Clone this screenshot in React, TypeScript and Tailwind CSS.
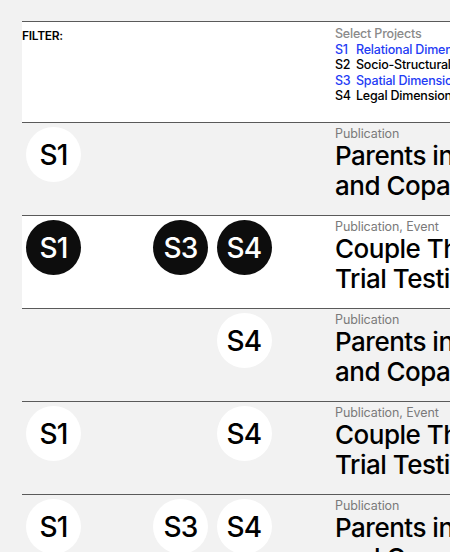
const projects = [
  { id: 'S1', name: 'Relational Dimension', active: true },
  { id: 'S2', name: 'Socio-Structural Dimension', active: false },
  { id: 'S3', name: 'Spatial Dimension', active: true },
  { id: 'S4', name: 'Legal Dimension', active: false },
]

const items = [
  { tags: ['S1'], type: 'Publication', title: 'Parents in Separation and Coparenting', highlight: false },
  { tags: ['S1', 'S3', 'S4'], type: 'Publication, Event', title: 'Couple Therapy and Trial Testimony', highlight: true },
  { tags: ['S4'], type: 'Publication', title: 'Parents in Separation and Coparenting', highlight: false },
  { tags: ['S1', 'S4'], type: 'Publication, Event', title: 'Couple Therapy and Trial Testimony', highlight: false },
  { tags: ['S1', 'S3', 'S4'], type: 'Publication', title: 'Parents in Separation and Coparenting', highlight: false },
]

const slots = ['S1', 'S2', 'S3', 'S4']

export default function App() {
  return (
    <div
      className="min-h-screen w-[450px] h-[552px] overflow-hidden bg-[#f2f2f2] pl-[22px] pt-[21px]"
      style={{ fontFamily: 'Inter, "Liberation Sans", sans-serif' }}
    >
      <div className="w-[760px] flex flex-col">
        {/* Filter header */}
        <div className="h-[101px] bg-white border-t border-[#5a5a5a] flex">
          <div className="w-[313px] pt-[5px] text-[12px] font-semibold text-black tracking-[-0.3px]">FILTER:</div>
          <div className="pt-[4px] text-[12.5px] leading-[15.6px] font-medium tracking-[-0.2px]">
            <div className="text-[#8a8a8a]">Select Projects</div>
            {projects.map((p) => (
              <div key={p.id} className={`flex ${p.active ? 'text-[#1f3cf5]' : 'text-black'}`}>
                <span className="w-[21px]">{p.id}</span>
                <span>{p.name}</span>
              </div>
            ))}
          </div>
        </div>

        {/* Items */}
        {items.map((item, i) => (
          <div
            key={i}
            className={`h-[93px] border-t border-[#5a5a5a] flex ${item.highlight ? 'bg-white' : ''}`}
          >
            <div className="w-[313px] grid grid-cols-[repeat(4,63.5px)] pl-[4px] pt-[4px]">
              {slots.map((s) => (
                <div key={s}>
                  {item.tags.includes(s) && (
                    <div
                      className={`w-[55px] h-[55px] rounded-full flex items-center justify-center text-[28px] font-medium tracking-[-0.8px] ${
                        item.highlight ? 'bg-[#0d0d0d] text-white' : 'bg-white text-black'
                      }`}
                    >
                      {s}
                    </div>
                  )}
                </div>
              ))}
            </div>
            <div className="w-[262px] pt-[3px]">
              <div className="text-[12.5px] leading-[15px] text-[#7a7a7a] tracking-[-0.1px]">{item.type}</div>
              <div className="text-[26px] leading-[30px] font-medium text-black tracking-[-0.5px]">{item.title}</div>
            </div>
          </div>
        ))}
      </div>
    </div>
  )
}
